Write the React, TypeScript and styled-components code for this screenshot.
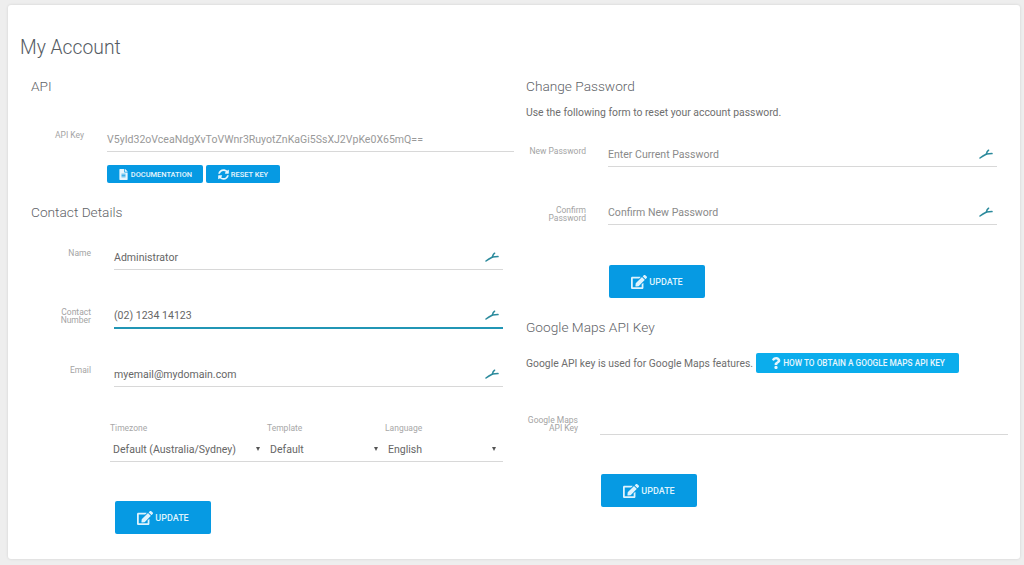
import React from "react";
import styled, { createGlobalStyle } from "styled-components";
import { FaFileAlt, FaSyncAlt, FaEdit, FaQuestion } from "react-icons/fa";

const Global = createGlobalStyle`
  html, body { margin: 0; padding: 0; height: 100%; overflow: hidden; background: #eeeeee; }
  body { font-family: Roboto, "Liberation Sans", sans-serif; color: #666; }
`;

const Page = styled.div`
  box-sizing: border-box;
  width: 1024px;
  height: 565px;
  padding: 5px 4px 6px 8px;
`;
const Card = styled.main`
  box-sizing: border-box;
  height: 554px;
  background: #fff;
  border-radius: 3px;
  box-shadow: 0 0 3px rgba(0, 0, 0, 0.12);
  padding: 31px 0 0 12px;
`;
const PageTitle = styled.h1`
  margin: 0;
  font-size: 19.3px;
  line-height: 24px;
  font-weight: 300;
  color: #555b63;
`;
const Columns = styled.div`
  display: grid;
  grid-template-columns: 495px 482px;
  margin-top: 16px;
  padding-left: 11px;
`;
const Column = styled.section`
  display: flex;
  flex-direction: column;
  align-items: flex-start;
`;
const SectionTitle = styled.h2<{ $top?: number }>`
  margin: ${(p) => p.$top ?? 0}px 0 0;
  height: 20px;
  font-size: 13.7px;
  line-height: 20px;
  font-weight: 300;
  color: #5f6468;
`;
const Field = styled.div<{ $top: number; $labelWidth: number; $gap: number; $width: number }>`
  display: grid;
  grid-template-columns: ${(p) => p.$labelWidth}px ${(p) => p.$width}px;
  column-gap: ${(p) => p.$gap}px;
  margin-top: ${(p) => p.$top}px;
`;
const Label = styled.label<{ $shift?: number }>`
  font-size: 8.5px;
  line-height: 8px;
  color: #a4a4a4;
  text-align: right;
  padding-top: ${(p) => p.$shift ?? 0}px;
`;
const InputBox = styled.div<{ $active?: boolean }>`
  box-sizing: border-box;
  height: 26px;
  display: flex;
  align-items: center;
  justify-content: space-between;
  border-bottom: ${(p) => (p.$active ? "2px solid #2196b5" : "1px solid #d8d8d8")};
  padding: 0 4px 0 0;
`;
const InputText = styled.span<{ $tone?: string }>`
  font-size: 10.55px;
  line-height: 14px;
  padding-top: 2px;
  color: ${(p) => p.$tone ?? "#666"};
`;
const ButtonRow = styled.div`
  display: flex;
  gap: 3px;
  margin: 13px 0 0 76px;
`;
const SmallButton = styled.button<{ $width: number }>`
  box-sizing: border-box;
  width: ${(p) => p.$width}px;
  height: 18px;
  display: flex;
  align-items: center;
  justify-content: center;
  gap: 2px;
  padding: 0;
  border: 0;
  border-radius: 2px;
  background: #069ae3;
  color: #e8f6fd;
  font: 500 7.45px Roboto, sans-serif;
  text-transform: uppercase;
`;
const HelpButton = styled(SmallButton)`
  height: 20px;
  background: #0badec;
  margin-left: 3px;
  gap: 1px;
  font-size: 8.3px;
`;
const UpdateButton = styled.button<{ $top: number; $left: number }>`
  box-sizing: border-box;
  width: 96px;
  height: 33px;
  margin: ${(p) => p.$top}px 0 0 ${(p) => p.$left}px;
  display: flex;
  align-items: center;
  justify-content: center;
  gap: 2px;
  padding: 0;
  border: 0;
  border-radius: 2px;
  background: #069ae3;
  color: #dff3fd;
  font: 500 9px Roboto, sans-serif;
  text-transform: uppercase;
`;
const SelectGrid = styled.div`
  box-sizing: border-box;
  width: 393px;
  margin: 35px 0 0 79px;
  display: grid;
  grid-template-columns: 157px 118px 118px;
  border-bottom: 1px solid #d8d8d8;
`;
const SelectCell = styled.div`
  display: flex;
  flex-direction: column;
`;
const SelectLabel = styled.span`
  font-size: 8.5px;
  line-height: 12px;
  color: #a8a8a8;
`;
const SelectValue = styled.div`
  box-sizing: border-box;
  height: 27px;
  display: flex;
  align-items: center;
  justify-content: space-between;
  padding: 3px 7px 0 3px;
  font-size: 10.55px;
  color: #666;
`;
const Caret = styled.span`
  width: 0;
  height: 0;
  border-left: 2.5px solid transparent;
  border-right: 2.5px solid transparent;
  border-top: 4px solid #555;
`;
const Para = styled.p<{ $top: number }>`
  margin: ${(p) => p.$top}px 0 0;
  font-size: 10.4px;
  line-height: 16px;
  color: #6e6e6e;
`;
const HelpRow = styled.div`
  display: flex;
  align-items: center;
  margin-top: 16px;
  font-size: 10.35px;
  color: #6e6e6e;
`;

const PenMark = () => (
  <svg width="14" height="10" viewBox="0 0 14 10" fill="none" stroke="#2b8a9c" strokeWidth="1.5" strokeLinecap="round">
    <path d="M1 9 C3 7.4 5.5 6 7.6 5 L13 4.6" />
    <path d="M7.4 5.2 C7.6 3.8 8.2 2.2 9.6 1.2" />
  </svg>
);

const Input = ({ text, tone, active }: { text: string; tone?: string; active?: boolean }) => (
  <InputBox $active={active}>
    <InputText $tone={tone}>{text}</InputText>
    <PenMark />
  </InputBox>
);

const Select = ({ label, value }: { label: string; value: string }) => (
  <SelectCell>
    <SelectLabel>{label}</SelectLabel>
    <SelectValue>
      {value}
      <Caret />
    </SelectValue>
  </SelectCell>
);

export default function App() {
  return (
    <Page>
      <Global />
      <Card>
        <PageTitle>My Account</PageTitle>
        <Columns>
          <Column>
            <SectionTitle>API</SectionTitle>
            <Field $top={30} $labelWidth={53} $gap={23} $width={407}>
              <Label $shift={5}>API Key</Label>
              <InputBox>
                <InputText $tone="#999">
                  V5yId32oVceaNdgXvToVWnr3RuyotZnKaGi5SsXJ2VpKe0X65mQ==
                </InputText>
              </InputBox>
            </Field>
            <ButtonRow>
              <SmallButton $width={96}>
                <FaFileAlt size={11} />
                Documentation
              </SmallButton>
              <SmallButton $width={74}>
                <FaSyncAlt size={11} />
                Reset Key
              </SmallButton>
            </ButtonRow>
            <SectionTitle $top={19}>Contact Details</SectionTitle>
            <Field $top={22} $labelWidth={60} $gap={23} $width={389}>
              <Label $shift={5}>Name</Label>
              <Input text="Administrator" />
            </Field>
            <Field $top={33} $labelWidth={60} $gap={23} $width={389}>
              <Label $shift={5}>
                Contact
                <br />
                Number
              </Label>
              <Input text="(02) 1234 14123" active />
            </Field>
            <Field $top={32} $labelWidth={60} $gap={23} $width={389}>
              <Label $shift={5}>Email</Label>
              <Input text="myemail@mydomain.com" />
            </Field>
            <SelectGrid>
              <Select label="Timezone" value="Default (Australia/Sydney)" />
              <Select label="Template" value="Default" />
              <Select label="Language" value="English" />
            </SelectGrid>
            <UpdateButton $top={39} $left={84}>
              <FaEdit size={16} />
              Update
            </UpdateButton>
          </Column>
          <Column>
            <SectionTitle>Change Password</SectionTitle>
            <Para $top={9}>Use the following form to reset your account password.</Para>
            <Field $top={20} $labelWidth={60} $gap={22} $width={389}>
              <Label $shift={6}>New Password</Label>
              <Input text="Enter Current Password" tone="#8a8a8a" />
            </Field>
            <Field $top={32} $labelWidth={60} $gap={22} $width={389}>
              <Label $shift={7}>
                Confirm
                <br />
                Password
              </Label>
              <Input text="Confirm New Password" tone="#8a8a8a" />
            </Field>
            <UpdateButton $top={40} $left={83}>
              <FaEdit size={16} />
              Update
            </UpdateButton>
            <SectionTitle $top={19}>Google Maps API Key</SectionTitle>
            <HelpRow>
              Google API key is used for Google Maps features.
              <HelpButton $width={203}>
                <FaQuestion size={12} />
                How to obtain a Google Maps API Key
              </HelpButton>
            </HelpRow>
            <Field $top={36} $labelWidth={52} $gap={22} $width={408}>
              <Label $shift={7}>
                Google Maps
                <br />
                API Key
              </Label>
              <InputBox />
            </Field>
            <UpdateButton $top={39} $left={75}>
              <FaEdit size={16} />
              Update
            </UpdateButton>
          </Column>
        </Columns>
      </Card>
    </Page>
  );
}
